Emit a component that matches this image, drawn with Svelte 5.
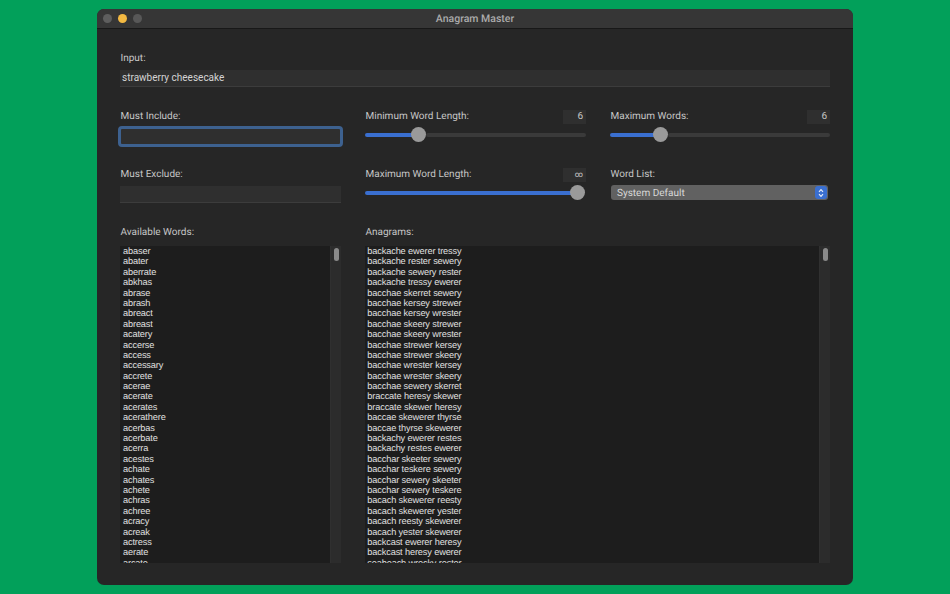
<script>
  let input = "strawberry cheesecake";

  const available = ["abaser","abater","aberrate","abkhas","abrase","abrash","abreact","abreast","acatery","accerse","access","accessary","accrete","acerae","acerate","acerates","acerathere","acerbas","acerbate","acerra","acestes","achate","achates","achete","achras","achree","acracy","acreak","actress","aerate","arcate"];

  const anagrams = ["backache ewerer tressy","backache rester sewery","backache sewery rester","backache tressy ewerer","bacchae skerret sewery","bacchae kersey strewer","bacchae kersey wrester","bacchae skeery strewer","bacchae skeery wrester","bacchae strewer kersey","bacchae strewer skeery","bacchae wrester kersey","bacchae wrester skeery","bacchae sewery skerret","braccate heresy skewer","braccate skewer heresy","baccae skewerer thyrse","baccae thyrse skewerer","backachy ewerer restes","backachy restes ewerer","bacchar skeeter sewery","bacchar teskere sewery","bacchar sewery skeeter","bacchar sewery teskere","bacach skewerer reesty","bacach skewerer yester","bacach reesty skewerer","bacach yester skewerer","backcast ewerer heresy","backcast heresy ewerer","seabeach wrecky rester"];
</script>

<div class="window">
  <div class="titlebar">
    <div class="lights">
      <span class="light grey"></span>
      <span class="light yellow"></span>
      <span class="light grey dim"></span>
    </div>
    <div class="title">Anagram Master</div>
  </div>

  <div class="content">
    <label class="label" for="input">Input:</label>
    <input id="input" class="field first" bind:value={input} />

    <div class="controls">
      <div class="cell">
        <div class="label">Must Include:</div>
        <div class="field focus"></div>
      </div>
      <div class="cell">
        <div class="head"><span class="label">Minimum Word Length:</span><span class="num">6</span></div>
        <div class="slider"><div class="fill" style="width: 24%"></div><div class="knob"></div><div class="rest"></div></div>
      </div>
      <div class="cell">
        <div class="head"><span class="label">Maximum Words:</span><span class="num">6</span></div>
        <div class="slider"><div class="fill" style="width: 22.5%"></div><div class="knob"></div><div class="rest"></div></div>
      </div>

      <div class="cell">
        <div class="label">Must Exclude:</div>
        <div class="field"></div>
      </div>
      <div class="cell">
        <div class="head"><span class="label">Maximum Word Length:</span><span class="num inf">∞</span></div>
        <div class="slider full"><div class="fill"></div><div class="knob"></div></div>
      </div>
      <div class="cell">
        <div class="label">Word List:</div>
        <div class="select">
          <span class="selected">System Default</span>
          <span class="stepper">
            <svg width="6" height="10" viewBox="0 0 6 10" fill="none" stroke="#e8eefa" stroke-width="1.1">
              <path d="M1 3.8 L3 1.6 L5 3.8" />
              <path d="M1 6.2 L3 8.4 L5 6.2" />
            </svg>
          </span>
        </div>
      </div>
    </div>

    <div class="lists">
      <div class="listcol">
        <div class="label">Available Words:</div>
        <div class="listbox">
          <div class="rows words">
            {#each available as w}<div class="row">{w}</div>{/each}
          </div>
          <div class="track"><div class="thumb"></div></div>
        </div>
      </div>
      <div class="listcol">
        <div class="label">Anagrams:</div>
        <div class="listbox">
          <div class="rows">
            {#each anagrams as a}<div class="row">{a}</div>{/each}
          </div>
          <div class="track"><div class="thumb"></div></div>
        </div>
      </div>
    </div>
  </div>
</div>

<style>
  :global(body) {
    margin: 0;
    background: #02a05a;
    font-family: Roboto, "Liberation Sans", Arial, sans-serif;
    text-rendering: geometricPrecision;
  }

  .window {
    box-sizing: border-box;
    width: 756px;
    height: 576px;
    margin: 9px 0 0 97px;
    background: #262626;
    border-radius: 7px;
    overflow: hidden;
    display: flex;
    flex-direction: column;
  }

  .titlebar {
    height: 19px;
    flex: none;
    background: #363636;
    border-bottom: 1px solid #181818;
    display: flex;
    align-items: center;
    justify-content: center;
    position: relative;
  }

  .lights {
    position: absolute;
    left: 6px;
    top: 5px;
    display: flex;
    gap: 6px;
  }

  .light {
    width: 9px;
    height: 9px;
    border-radius: 50%;
  }

  .grey {
    background: #5e5e5e;
  }

  .dim {
    background: #585858;
  }

  .yellow {
    background: #f3b942;
  }

  .title {
    font-size: 10.5px;
    font-weight: 500;
    color: #aaa;
  }

  .content {
    padding: 22px 23px 0;
    display: flex;
    flex-direction: column;
  }

  .label {
    display: block;
    box-sizing: border-box;
    height: 13px;
    padding: 1px 0 0 0.5px;
    font-size: 10px;
    line-height: 13px;
    color: #c6c6c6;
    white-space: nowrap;
  }

  .field {
    box-sizing: border-box;
    display: block;
    width: 100%;
    height: 17px;
    margin-top: 5.5px;
    padding: 0 2px 2px;
    background: #2f2f2f;
    border: none;
    border-bottom: 1px solid #3c3c3c;
    border-radius: 0;
    outline: none;
    color: #d4d4d4;
    font: 10px Roboto, "Liberation Sans", Arial, sans-serif;
  }

  .first {
    margin-top: 6px;
  }

  .focus {
    outline: 3px solid #3d618f;
    outline-offset: -1px;
    border-radius: 2px;
    border-bottom: none;
  }

  .controls {
    display: grid;
    grid-template-columns: 221px 221px 220px;
    column-gap: 24px;
    row-gap: 22px;
    margin-top: 22px;
  }

  .cell {
    height: 36px;
  }

  .head {
    display: flex;
    justify-content: space-between;
    align-items: flex-start;
    height: 15px;
  }

  .num {
    box-sizing: border-box;
    width: 23px;
    height: 14px;
    margin-top: 1px;
    padding-right: 3px;
    background: #2f2f2f;
    color: #c6c6c6;
    font-size: 10px;
    line-height: 14px;
    text-align: right;
  }

  .inf {
    font-size: 8px;
  }

  .slider {
    display: flex;
    align-items: center;
    height: 15px;
    margin-top: 3px;
  }

  .fill {
    height: 4px;
    flex: none;
    margin-right: -7px;
    background: #3a6fd0;
    border-radius: 2px;
  }

  .knob {
    width: 15px;
    height: 15px;
    flex: none;
    border-radius: 50%;
    background: #9a9a9a;
    position: relative;
  }

  .full {
    padding-right: 1px;
  }

  .full .fill {
    flex: 1;
  }

  .rest {
    flex: 1;
    height: 4px;
    background: #3a3a3a;
    border-radius: 2px;
  }

  .select {
    box-sizing: border-box;
    display: flex;
    align-items: center;
    justify-content: space-between;
    width: 217px;
    height: 15px;
    margin: 5px 0 0 1px;
    padding: 0 1px 0 6px;
    background: #616161;
    border-radius: 3px;
    color: #d8d8d8;
    font-size: 10px;
  }

  .selected {
    padding-top: 1px;
  }

  .stepper {
    display: flex;
    align-items: center;
    justify-content: center;
    width: 12px;
    height: 13px;
    border-radius: 3px;
    background: #3a6fd0;
  }

  .lists {
    display: grid;
    grid-template-columns: 221px 465px;
    column-gap: 24px;
    margin-top: 22px;
  }

  .listbox {
    display: flex;
    height: 317px;
    margin-top: 8px;
    overflow: hidden;
  }

  .rows {
    flex: 1;
    min-width: 0;
    background: #1d1d1d;
    overflow: hidden;
  }

  .row {
    height: 10.4px;
    padding-left: 2.3px;
    font-family: "Liberation Sans", Arial, sans-serif;
    font-size: 9.2px;
    letter-spacing: -0.13px;
    line-height: 10.4px;
    color: #e0e0e0;
    white-space: nowrap;
  }

  .words .row {
    padding-left: 3px;
  }

  .track {
    flex: none;
    width: 11px;
    background: #2c2c2c;
    border-left: 1px solid #303030;
    box-sizing: border-box;
  }

  .thumb {
    width: 5px;
    height: 13px;
    margin: 2px 0 0 3px;
    border-radius: 3px;
    background: #8a8a8a;
  }
</style>
